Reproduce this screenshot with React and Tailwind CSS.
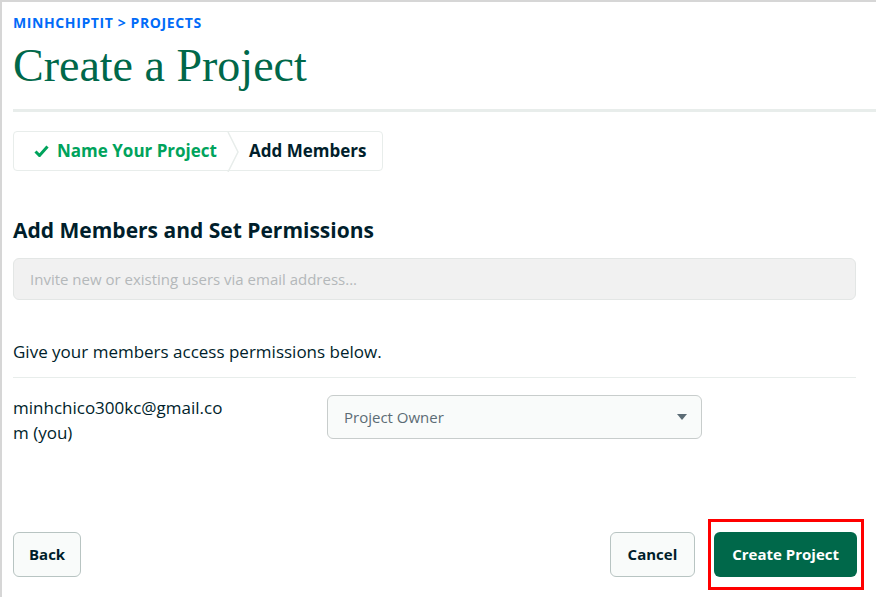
import React from 'react';

const sans = { fontFamily: '"Open Sans", "Noto Sans", sans-serif' };

const App = () => {
  return (
    <div
      className="min-h-[597px] w-[876px] bg-white border-t-2 border-l-2 border-[#d6d6d6] pl-[11px] pr-[20px] text-[#001e2b] overflow-hidden"
      style={sans}
    >
      {/* breadcrumb + title */}
      <div className="pt-[13px] text-[14px] font-bold text-[#016bf8] leading-[16px] tracking-[0.6px]">
        MINHCHIPTIT &gt; PROJECTS
      </div>
      <h1
        className="mt-[9px] text-[46px] leading-[52px] text-[#00684a]"
        style={{ fontFamily: '"Liberation Serif", serif' }}
      >
        Create a Project
      </h1>
      <div className="mt-[17px] -mr-[20px] h-[3px] bg-[#e8edeb]" />

      {/* stepper */}
      <div className="mt-[19px] inline-flex h-[40px] items-stretch rounded-[4px] border border-[#e8edeb]">
        <div className="flex items-center gap-[8px] pl-[20px] pr-[10px] text-[17px] font-bold text-[#00a35c]">
          <svg width="15" height="12" viewBox="0 0 15 12">
            <path d="M1.5 6.5 L5.5 10.5 L13.5 1.5" fill="none" stroke="#00a35c" strokeWidth="3" />
          </svg>
          Name Your Project
        </div>
        <svg width="12" height="40" viewBox="0 0 12 40" className="shrink-0">
          <path d="M1 0 L11 20 L1 40" fill="none" stroke="#e8edeb" strokeWidth="1.5" />
        </svg>
        <div className="flex items-center pl-[10px] pr-[16px] text-[17px] font-bold text-[#001e2b]">
          Add Members
        </div>
      </div>

      {/* members */}
      <h2 className="mt-[45px] text-[21px] font-bold leading-[28px]">Add Members and Set Permissions</h2>
      <div className="mt-[14px] flex h-[42px] items-center rounded-[6px] border border-[#e3e6e5] bg-[#f1f1f1] px-[16px] text-[15px] text-[#b4b8ba]">
        Invite new or existing users via email address...
      </div>

      <p className="mt-[41px] text-[17px] leading-[22px]">Give your members access permissions below.</p>
      <div className="mt-[14px] h-px bg-[#e8edeb]" />

      <div className="mt-[17px] flex items-start">
        <div className="w-[240px] text-[17px] leading-[25px]">
          <div>minhchico300kc@gmail.co</div>
          <div>m (you)</div>
        </div>
        <div className="ml-[74px] flex h-[44px] w-[375px] items-center justify-between rounded-[6px] border border-[#c8cdcc] bg-[#f9fbfa] pl-[16px] pr-[14px] text-[15px] text-[#5c6c75]">
          Project Owner
          <svg width="10" height="6" viewBox="0 0 10 6">
            <path d="M0 0 L10 0 L5 6 Z" fill="#5c6c75" />
          </svg>
        </div>
      </div>

      {/* footer buttons */}
      <div className="mt-[74px] flex items-center justify-between">
        <button className="h-[45px] rounded-[6px] border border-[#b8c4c2] bg-[#f9fbfa] px-[15px] text-[15px] font-bold">
          Back
        </button>
        <div className="flex items-center">
          <button className="h-[45px] rounded-[6px] border border-[#b8c4c2] bg-[#f9fbfa] px-[17px] text-[15px] font-bold">
            Cancel
          </button>
          <div className="ml-[13px] -mr-[8px] border-[3px] border-[#ff0000] py-[10px] pl-[3px] pr-[4px]">
            <button className="h-[45px] rounded-[6px] bg-[#00684a] px-[18px] text-[15px] font-bold text-white">
              Create Project
            </button>
          </div>
        </div>
      </div>
    </div>
  );
};

export default App;
